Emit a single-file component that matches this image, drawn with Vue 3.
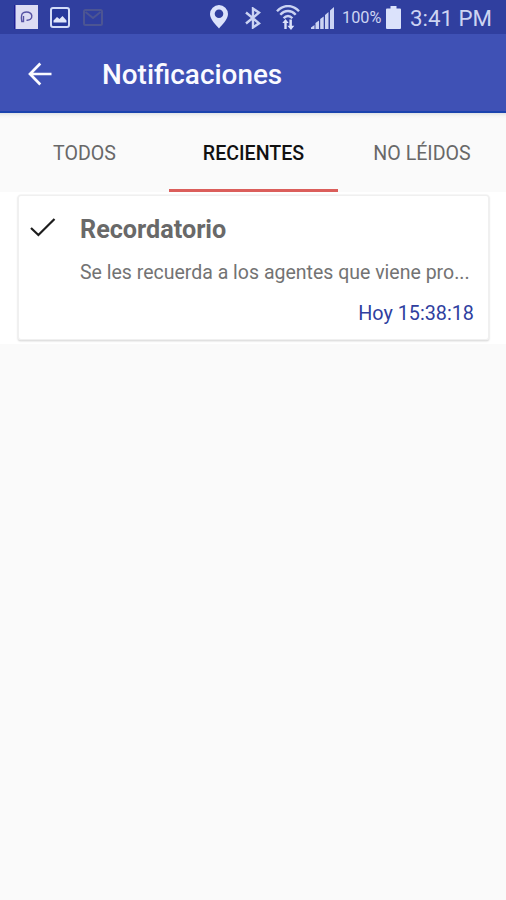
<script setup>
import { ref } from 'vue'

const tabs = ['TODOS', 'RECIENTES', 'NO LÉIDOS']
const active = ref(1)
const notices = [
  {
    title: 'Recordatorio',
    text: 'Se les recuerda a los agentes que viene pro...',
    time: 'Hoy 15:38:18',
  },
]
</script>

<template>
  <div class="screen">
    <div class="status">
      <svg class="ic-app" width="24" height="24" viewBox="0 0 24 24">
        <rect width="24" height="24" fill="#dddcf3" />
        <path d="M0 0h1.5v24H0z" fill="#1c1c93" />
        <path d="M9.500 11v5.500H7.800c-.6-3-.7-7.500 1.700-8.800 3-1.600 7.800-.6 8.300 3 .4 3.300-2.300 4.800-5.300 4.500" fill="none" stroke="#5753a4" stroke-width="1.400" />
      </svg>
      <svg class="ic-image" width="20" height="21" viewBox="0 0 20 21">
        <rect x="1" y="1" width="18" height="19" rx="2" fill="#26389b" stroke="#d3dcf8" stroke-width="2" />
        <path d="M3.500 15.500v-2l3.500-3.500 2.500 2 3-3 4 4.500v2z" fill="#e0e6fb" />
      </svg>
      <svg class="ic-mail" width="20" height="17" viewBox="0 0 20 17">
        <rect x="1" y="1" width="18" height="15" rx="1.500" fill="none" stroke="#4c5593" stroke-width="2" />
        <path d="M2.500 3l7.500 6 7.500-6" fill="none" stroke="#4c5593" stroke-width="2" />
      </svg>
      <span class="fill"></span>
      <svg class="ic-pin" width="18" height="24" viewBox="0 0 18 24">
        <path fill-rule="evenodd" d="M9 0a9 9 0 0 0-9 9c0 5.500 6 11 9 14.500 3-3.500 9-9 9-14.500a9 9 0 0 0-9-9zm0 4.400a4.300 4.300 0 1 1 0 8.600 4.300 4.300 0 0 1 0-8.600z" fill="#dbe2fb" />
      </svg>
      <svg class="ic-bt" width="16" height="22" viewBox="0 0 16 22">
        <path d="M1 5.500l13 10.800-6 4.200V1.500l6 4.200L1 16.500" fill="none" stroke="#cbd3f3" stroke-width="2.400" />
      </svg>
      <svg class="ic-wifi" width="24" height="25" viewBox="0 0 24 25">
        <g fill="none" stroke="#cbd3f3" stroke-width="2.400">
          <path d="M1 6.300C7.500-.7 16.500-.7 23 6.300M4.300 9.800c4.500-5 10.900-5 15.400 0M7.600 13.300c2.700-3 6.100-3 8.800 0" />
        </g>
        <path d="M9.500 14l3.200 4h-2v6H8.300v-6H6.300zM15 25l-3.600-4.300h2V14.500h2.500v6.200h2.400z" fill="#dce2fa" />
      </svg>
      <svg class="ic-signal" width="23" height="22" viewBox="0 0 23 22">
        <path d="M0 22v-1.500L3.500 18v4zM4.500 22v-6l3.500-2.500V22zM9.200 22V12l3.500-2.500V22zM14 22V8l3.500-3v17zM19 22V3.500L23 0v22z" fill="#cbd3f3" />
      </svg>
      <span class="percent">100%</span>
      <svg class="ic-battery" width="15" height="23" viewBox="0 0 15 23">
        <path d="M4.500 0h6v2.500H14q1 0 1 1V22q0 1-1 1H1q-1 0-1-1V3.500q0-1 1-1h3.500z" fill="#dbe2fb" />
      </svg>
      <span class="clock">3:41 PM</span>
    </div>

    <header class="bar">
      <svg class="back" width="24" height="24" viewBox="0 0 24 24">
        <path d="M12.300 1.500L2 12l10.300 10.500M2 12h21.500" fill="none" stroke="#fafaff" stroke-width="2.700" />
      </svg>
      <h1 class="heading">Notificaciones</h1>
    </header>

    <nav class="tabs">
      <button
        v-for="(tab, i) in tabs"
        :key="tab"
        class="tab"
        :class="{ active: active === i }"
        @click="active = i"
      ><span>{{ tab }}</span></button>
    </nav>

    <main class="list">
      <article v-for="n in notices" :key="n.title" class="card">
        <svg class="check" width="26" height="19" viewBox="0 0 26 19">
          <path d="M1 10l7.400 7L24.500 1" fill="none" stroke="#1d1d1d" stroke-width="2.200" />
        </svg>
        <div class="body">
          <h2 class="title">{{ n.title }}</h2>
          <p class="text">{{ n.text }}</p>
          <time class="time">{{ n.time }}</time>
        </div>
      </article>
    </main>
  </div>
</template>

<style>
body {
  margin: 0;
  background: #fafafa;
}
</style>

<style scoped>
.screen {
  height: 900px;
  overflow: hidden;
  background: #fafafa;
  font-family: Roboto, sans-serif;
}
.status {
  display: flex;
  align-items: flex-start;
  box-sizing: border-box;
  height: 34px;
  padding: 5px 0 0 14px;
  background: #303f9f;
  color: #cdd4f2;
}
.status svg {
  flex: none;
}
.ic-image {
  margin: 2px 0 0 12px;
}
.ic-mail {
  margin: 4px 0 0 13px;
}
.fill {
  flex: 1;
}
.ic-pin {
  margin-right: 17px;
}
.ic-bt {
  margin: 2px 15px 0 0;
}
.ic-wifi {
  margin-right: 11px;
}
.ic-signal {
  margin: 2px 8px 0 0;
}
.percent {
  width: 41px;
  margin: 3px 3px 0 0;
  font-size: 16.3px;
  line-height: 20px;
}
.ic-battery {
  margin: 1px 9px 0 0;
}
.clock {
  width: 96px;
  font-size: 22.3px;
  line-height: 26px;
  white-space: nowrap;
}
.bar {
  display: flex;
  align-items: center;
  box-sizing: border-box;
  height: 79px;
  padding-left: 28px;
  border-bottom: 2px solid #1b43ae;
  background: #3f51b5;
}
.back {
  margin-top: 3px;
}
.heading {
  margin: 4px 0 0 50px;
  color: #fafaff;
  font-size: 27.9px;
  font-weight: 500;
  line-height: 34px;
}
.tabs {
  display: grid;
  grid-template-columns: 169px 169px 168px;
  height: 79px;
  background: linear-gradient(#dfe3e5, #f5f5f5 3px, #fafafa 6px);
}
.tab {
  display: flex;
  align-items: center;
  justify-content: center;
  box-sizing: border-box;
  margin: 0;
  padding: 5px 0 0;
  border: 0;
  border-bottom: 3px solid transparent;
  background: none;
  color: #686868;
  font: 400 19.6px/24px Roboto, sans-serif;
}
.tab.active {
  border-bottom-color: #db5e5b;
  color: #111;
  font-weight: 500;
}
.list {
  box-sizing: border-box;
  height: 152px;
  padding: 4px 18px 0 19px;
  background: #fff;
}
.card {
  display: flex;
  box-sizing: border-box;
  height: 143px;
  padding: 17px 14px 0 11px;
  border-radius: 2px;
  background: #fff;
  box-shadow: 0 0 0 1.5px #f0f0f0, 0 1px 2px 0.5px #c4c4c4;
}
.check {
  flex: none;
  margin-top: 5px;
}
.body {
  display: flex;
  flex: 1;
  flex-direction: column;
  min-width: 0;
  margin-left: 24px;
}
.title {
  margin: 1px 0 0;
  color: #696969;
  font-size: 25.2px;
  font-weight: 700;
  line-height: 32px;
}
.text {
  margin: 14px 0 0;
  color: #737373;
  font-size: 19.5px;
  line-height: 26px;
  white-space: nowrap;
}
.time {
  align-self: flex-end;
  margin-top: 15px;
  color: #303f9f;
  font-size: 19.8px;
  line-height: 26px;
}
</style>
